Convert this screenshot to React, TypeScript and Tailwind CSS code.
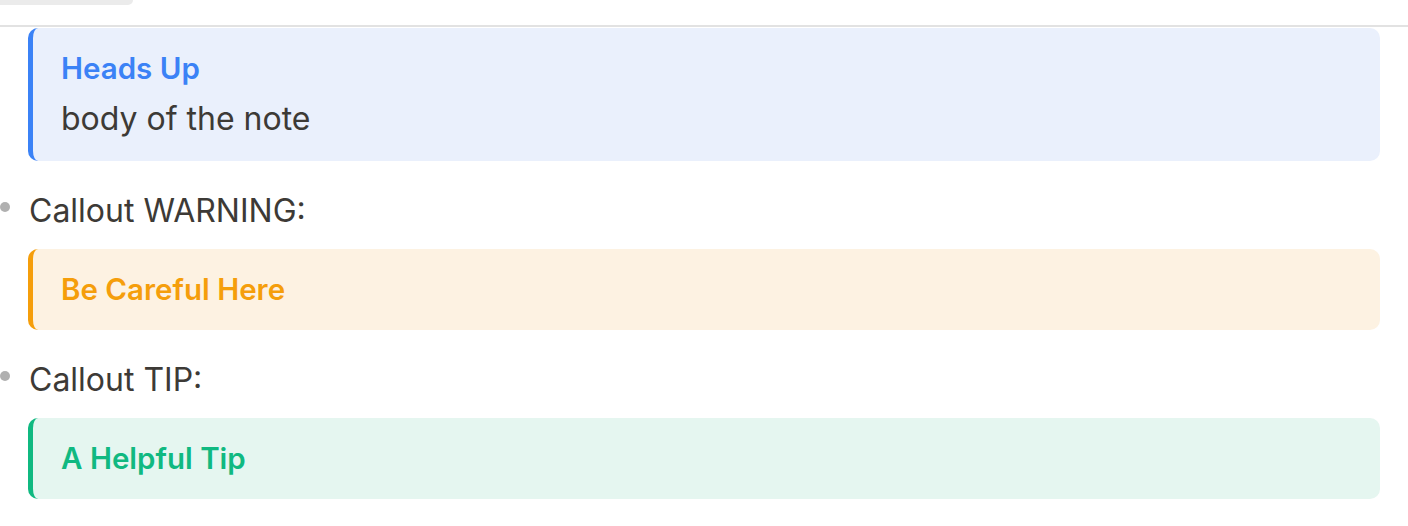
import React from 'react';

type Tone = 'note' | 'warning' | 'tip';

const tones: Record<Tone, { box: string; title: string }> = {
  note: { box: 'bg-[#eaf0fc] border-[#3b82f6]', title: 'text-[#3b82f6]' },
  warning: { box: 'bg-[#fdf2e2] border-[#f59e0b]', title: 'text-[#f59e0b]' },
  tip: { box: 'bg-[#e5f6f0] border-[#10b981]', title: 'text-[#10b981]' },
};

function Callout({ tone, title, children }: { tone: Tone; title: string; children?: React.ReactNode }) {
  const t = tones[tone];
  return (
    <div className={`rounded-[10px] border-l-[5px] py-[22px] pl-[28px] pr-6 ${t.box}`}>
      <div className={`text-[29.5px] leading-[37px] font-semibold ${t.title}`}>{title}</div>
      {children && <div className="mt-[12px] text-[32px] leading-[40px]">{children}</div>}
    </div>
  );
}

function Bullet({ children }: { children: React.ReactNode }) {
  return (
    <div className="relative mt-[27.5px] mb-[16.5px] -ml-[28px] pl-[29px] text-[32px] leading-[44px]">
      <span className="absolute left-0 top-[13px] h-[10px] w-[10px] rounded-full bg-[#b0b0b0]" />
      {children}
    </div>
  );
}

export default function App() {
  return (
    <div className="h-[526px] w-[1408px] overflow-hidden bg-white text-[#3d3a36] font-['Inter',sans-serif]">
      <div className="h-[27px] border-b-2 border-[#e2e2e2]">
        <div className="h-[5px] w-[133px] rounded-br-[10px] bg-[#ebebeb]" />
      </div>
      <div className="pl-[28px] pr-[28px] pt-px">
        <Callout tone="note" title="Heads Up">
          body of the note
        </Callout>
        <Bullet>Callout WARNING:</Bullet>
        <Callout tone="warning" title="Be Careful Here" />
        <Bullet>Callout TIP:</Bullet>
        <Callout tone="tip" title="A Helpful Tip" />
      </div>
    </div>
  );
}
